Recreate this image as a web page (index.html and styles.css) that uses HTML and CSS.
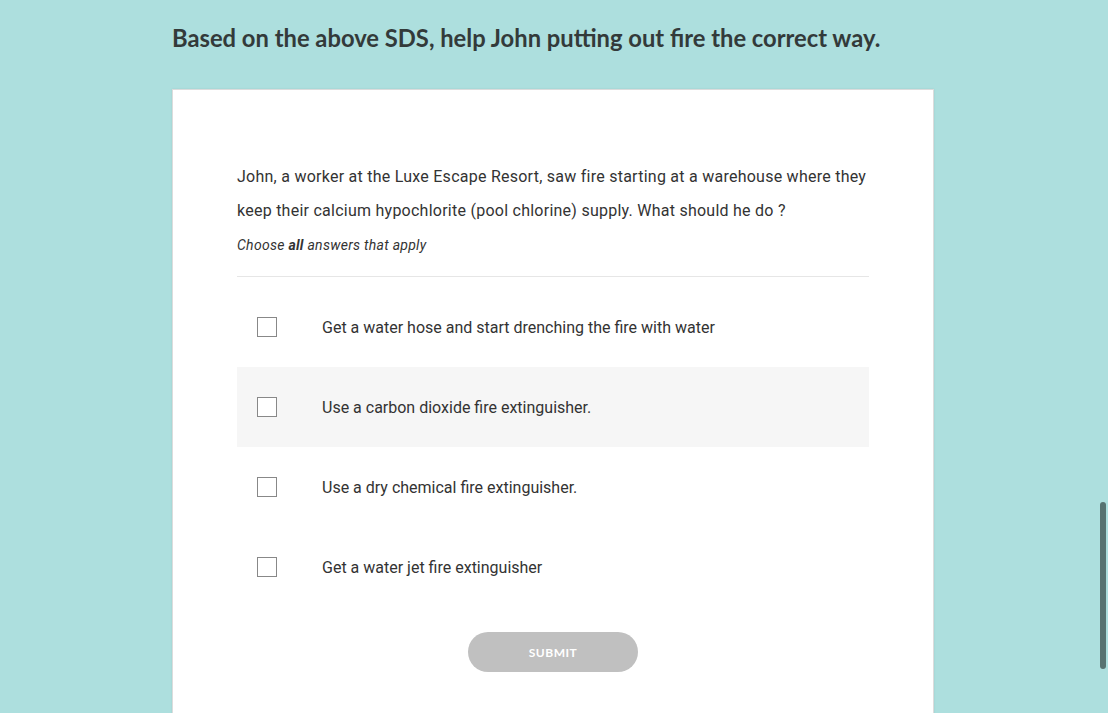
FILE: index.html
```
<!DOCTYPE html>
<html>
<head>
<meta charset="utf-8">
<link rel="stylesheet" href="styles.css">
</head>
<body>
<div class="page">
  <h1 class="title">Based on the above SDS, help John putting out fire the correct way.</h1>
  <div class="card">
    <p class="question">John, a worker at the Luxe Escape Resort, saw fire starting at a warehouse where they keep their calcium hypochlorite (pool chlorine) supply. What should he do ?</p>
    <p class="hint">Choose <b>all</b> answers that apply</p>
    <div class="options">
      <div class="option"><span class="box"></span><span class="label">Get a water hose and start drenching the fire with water</span></div>
      <div class="option hover"><span class="box"></span><span class="label">Use a carbon dioxide fire extinguisher.</span></div>
      <div class="option"><span class="box"></span><span class="label">Use a dry chemical fire extinguisher.</span></div>
      <div class="option"><span class="box"></span><span class="label">Get a water jet fire extinguisher</span></div>
    </div>
    <div class="actions"><button class="submit">SUBMIT</button></div>
  </div>
</div>
<div class="scrollbar"></div>
</body>
</html>
```
FILE: styles.css
```
html, body {
  margin: 0;
  padding: 0;
  height: 100%;
  overflow: hidden;
}
body {
  background: #addfde;
  font-family: Roboto, "Liberation Sans", sans-serif;
  color: #333;
}
.page {
  width: 762px;
  margin-left: 172px;
  padding-top: 22px;
}
.title {
  font-family: Lato, "Liberation Sans", sans-serif;
  font-weight: 700;
  font-size: 23.75px;
  line-height: 32px;
  color: #333a3a;
  margin: 0 0 35px 0;
  white-space: nowrap;
}
.card {
  background: #fff;
  border: 1px solid #dcdcdc;
  box-shadow: 0 0 2px rgba(0,0,0,0.08);
  padding: 70px 64px 40px 64px;
  min-height: 700px;
}
.question {
  margin: 0;
  font-size: 16px;
  line-height: 34px;
  letter-spacing: 0.25px;
  color: #333;
}
.hint {
  margin: 0;
  font-size: 14px;
  font-style: italic;
  line-height: 34px;
  letter-spacing: 0.28px;
  color: #333;
  padding-bottom: 14px;
  border-bottom: 1px solid #e6e6e6;
}
.hint b {
  font-weight: 700;
}
.options {
  padding-top: 10px;
}
.option {
  display: flex;
  align-items: center;
  height: 80px;
  padding-left: 20px;
}
.option.hover {
  background: #f6f6f6;
}
.box {
  width: 18px;
  height: 18px;
  border: 1px solid #888;
  background: #fff;
  flex: none;
}
.label {
  margin-left: 45px;
  font-size: 16px;
  color: #333;
}
.actions {
  display: flex;
  justify-content: center;
  padding-top: 25px;
}
.submit {
  width: 170px;
  height: 40px;
  border: none;
  border-radius: 20px;
  background: #c0c0c0;
  color: #fff;
  font-family: Lato, "Liberation Sans", sans-serif;
  font-weight: 700;
  font-size: 12px;
  letter-spacing: 0.5px;
}
.scrollbar {
  position: fixed;
  left: 1100px;
  top: 502px;
  width: 6px;
  height: 167px;
  border-radius: 3px;
  background: #577371;
}
```
